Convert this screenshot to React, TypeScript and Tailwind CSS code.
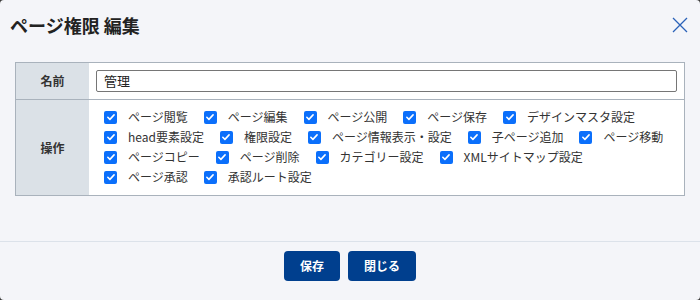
const rows: string[][] = [
  ["ページ閲覧", "ページ編集", "ページ公開", "ページ保存", "デザインマスタ設定"],
  ["head要素設定", "権限設定", "ページ情報表示・設定", "子ページ追加", "ページ移動"],
  ["ページコピー", "ページ削除", "カテゴリー設定", "XMLサイトマップ設定"],
  ["ページ承認", "承認ルート設定"],
];

function Check({ label }: { label: string }) {
  return (
    <label className="mr-[16px] flex items-center">
      <span className="mr-[11px] flex h-[13px] w-[13px] items-center justify-center rounded-[2px] bg-[#0b6ffb]">
        <svg viewBox="0 0 12 12" className="h-[10px] w-[10px]">
          <path d="M2.2 6.3l2.5 2.5 5-5.3" fill="none" stroke="#fff" strokeWidth="1.9" strokeLinecap="round" strokeLinejoin="round" />
        </svg>
      </span>
      <span className="text-[12px] leading-[20px] text-[#333]">{label}</span>
    </label>
  );
}

export default function App() {
  return (
    <main
      className="h-[300px] w-[700px] bg-[#3a3a3a]"
      style={{ fontFamily: '"Noto Sans CJK JP", "Noto Sans", sans-serif' }}
    >
      <div className="flex h-[300px] w-[700px] flex-col rounded-[4px] bg-[#f4f5f9]">
        <div className="flex h-[50px] items-center justify-between pl-[10px] pr-[12px]">
          <h1 className="text-[18px] font-bold text-[#222]">ページ権限 編集</h1>
          <svg viewBox="0 0 16 16" className="h-[16px] w-[16px]">
            <path d="M1 1l14 14M15 1L1 15" stroke="#2a62b8" strokeWidth="1.3" />
          </svg>
        </div>

        <div className="mx-[15px] mt-[12px] border border-[#a9b2bc] bg-white">
          <div className="flex border-b border-[#a9b2bc]">
            <div className="flex w-[73px] items-center justify-center bg-[#dbe1e7] text-[12px] font-bold text-[#333]">
              名前
            </div>
            <div className="flex-1 px-[7px] py-[7px]">
              <div className="flex h-[22px] items-center rounded-[2px] border border-[#767676] px-[7px] text-[13px] text-[#222]">
                管理
              </div>
            </div>
          </div>
          <div className="flex">
            <div className="flex w-[73px] items-center justify-center bg-[#dbe1e7] text-[12px] font-bold text-[#333]">
              操作
            </div>
            <div className="flex-1 pb-[8px] pl-[15px] pt-[7px]">
              {rows.map((row, i) => (
                <div key={i} className="flex">
                  {row.map((l) => (
                    <Check key={l} label={l} />
                  ))}
                </div>
              ))}
            </div>
          </div>
        </div>

        <div className="mt-auto border-t border-[#dce2ea] pb-[19px] pt-[9px]">
          <div className="flex justify-center gap-[8px]">
            <button className="h-[30px] w-[56px] rounded-[4px] bg-[#003f8e] text-[12px] font-bold text-white">
              保存
            </button>
            <button className="h-[30px] w-[68px] rounded-[4px] bg-[#003f8e] text-[12px] font-bold text-white">
              閉じる
            </button>
          </div>
        </div>
      </div>
    </main>
  );
}
